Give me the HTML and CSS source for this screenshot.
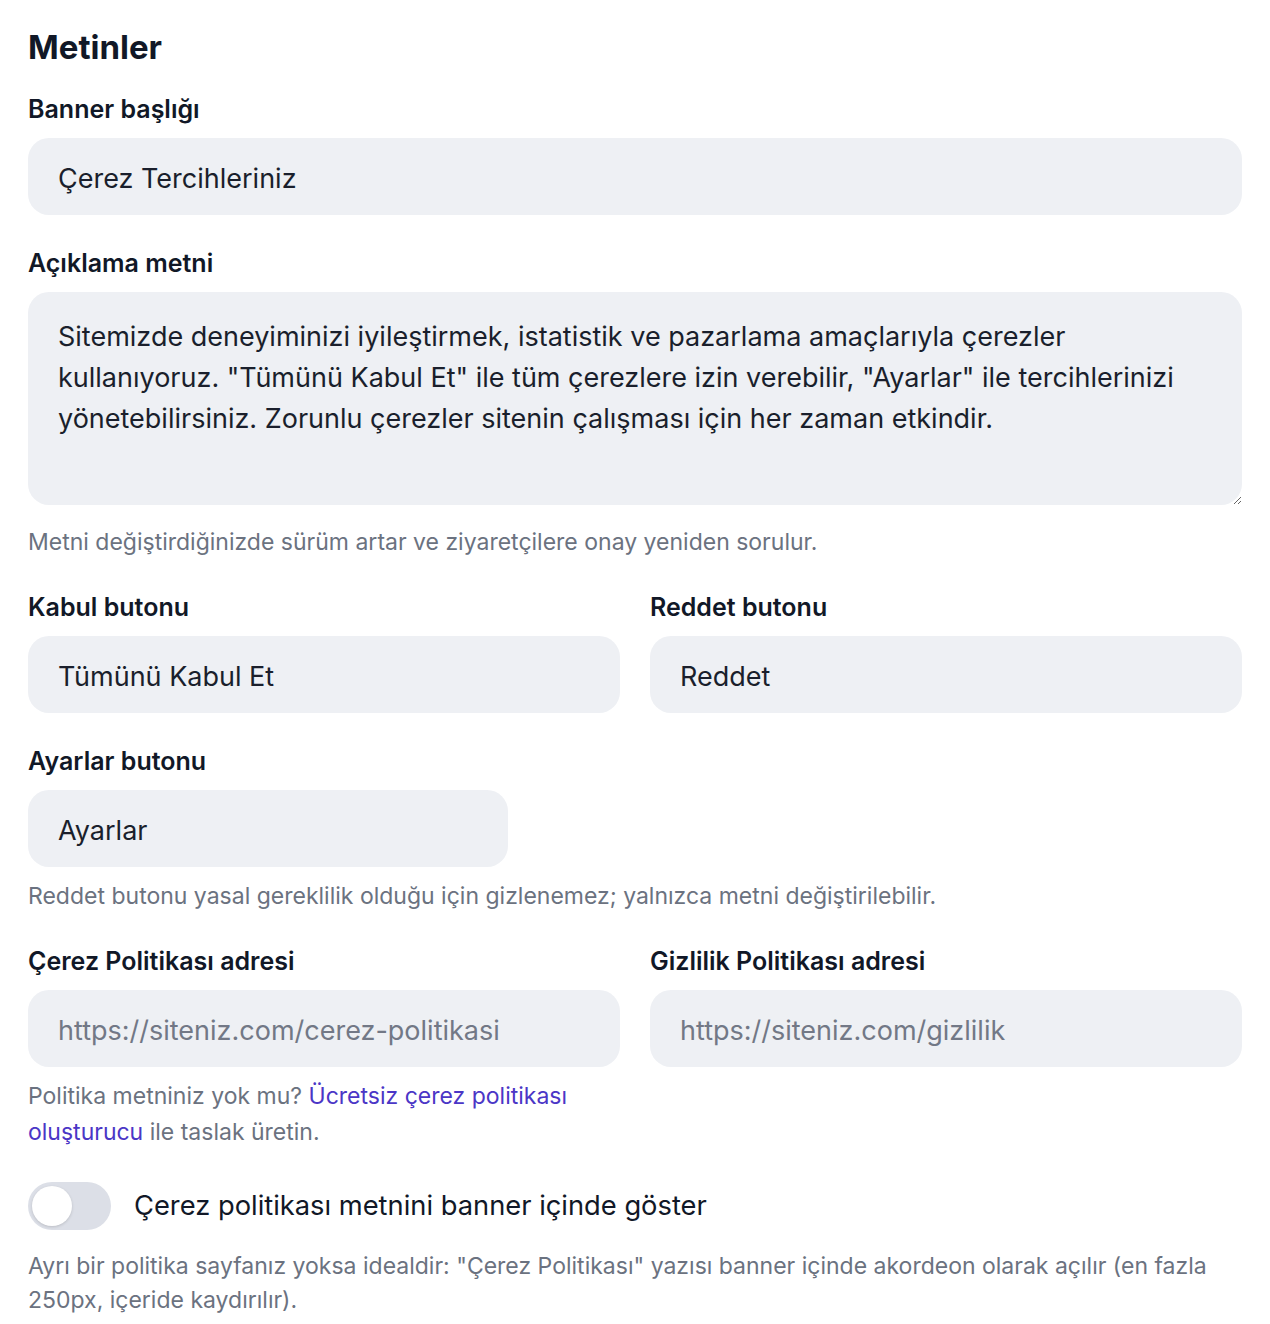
FILE: index.html
```html
<!DOCTYPE html>
<html lang="tr">
<head>
<meta charset="utf-8">
<title>Metinler</title>
<link rel="stylesheet" href="styles.css">
</head>
<body>
<main class="page">
  <h2 class="title">Metinler</h2>

  <div class="block field">
    <label class="label" for="t1">Banner başlığı</label>
    <input class="input" id="t1" type="text" value="Çerez Tercihleriniz">
  </div>

  <div class="block field">
    <label class="label" for="t2">Açıklama metni</label>
    <textarea class="input textarea" id="t2">Sitemizde deneyiminizi iyileştirmek, istatistik ve pazarlama amaçlarıyla çerezler kullanıyoruz. "Tümünü Kabul Et" ile tüm çerezlere izin verebilir, "Ayarlar" ile tercihlerinizi yönetebilirsiniz. Zorunlu çerezler sitenin çalışması için her zaman etkindir.</textarea>
    <p class="help help-ta">Metni değiştirdiğinizde sürüm artar ve ziyaretçilere onay yeniden sorulur.</p>
  </div>

  <div class="block grid">
    <div class="field">
      <label class="label" for="t3">Kabul butonu</label>
      <input class="input" id="t3" type="text" value="Tümünü Kabul Et">
    </div>
    <div class="field">
      <label class="label" for="t4">Reddet butonu</label>
      <input class="input" id="t4" type="text" value="Reddet">
    </div>
  </div>

  <div class="block field">
    <label class="label" for="t5">Ayarlar butonu</label>
    <input class="input input-narrow" id="t5" type="text" value="Ayarlar">
    <p class="help">Reddet butonu yasal gereklilik olduğu için gizlenemez; yalnızca metni değiştirilebilir.</p>
  </div>

  <div class="block grid">
    <div class="field">
      <label class="label" for="t6">Çerez Politikası adresi</label>
      <input class="input" id="t6" type="text" placeholder="https://siteniz.com/cerez-politikasi">
      <p class="help help-tall">Politika metniniz yok mu? <a class="link" href="#">Ücretsiz çerez politikası oluşturucu</a> ile taslak üretin.</p>
    </div>
    <div class="field">
      <label class="label" for="t7">Gizlilik Politikası adresi</label>
      <input class="input" id="t7" type="text" placeholder="https://siteniz.com/gizlilik">
    </div>
  </div>

  <div class="block toggle-row">
    <span class="toggle"><span class="knob"></span></span>
    <span class="toggle-label">Çerez politikası metnini banner içinde göster</span>
  </div>
  <p class="help help-last">Ayrı bir politika sayfanız yoksa idealdir: "Çerez Politikası" yazısı banner içinde akordeon olarak açılır (en fazla 250px, içeride kaydırılır).</p>
</main>
</body>
</html>
```

FILE: styles.css
```css
* { box-sizing: border-box; }

html, body {
  margin: 0;
  padding: 0;
  background: #ffffff;
}

body {
  font-family: Inter, "Noto Sans", "Liberation Sans", sans-serif;
  color: #111827;
}

.page {
  padding: 29px 28px 0 28px;
  display: flex;
  flex-direction: column;
}

.title {
  margin: 0 0 -4px 0;
  font-size: 33px;
  line-height: 36px;
  font-weight: 700;
  color: #111827;
}

.block { margin-top: 33px; }

.field {
  display: flex;
  flex-direction: column;
  min-width: 0;
}

.grid {
  display: grid;
  grid-template-columns: 1fr 1fr;
  column-gap: 30px;
  align-items: start;
}

.label {
  display: block;
  font-size: 25px;
  line-height: 30px;
  font-weight: 600;
  color: #111827;
  margin-bottom: 14px;
}

.input {
  display: block;
  width: 100%;
  height: 77px;
  padding: 4px 30px 0 30px;
  border: none;
  outline: none;
  border-radius: 21px;
  background: #eef0f4;
  font-family: Inter, "Noto Sans", "Liberation Sans", sans-serif;
  font-size: 27px;
  color: #1a1f2c;
}

.input::placeholder { color: #727886; }

.input-narrow { width: 480px; }

.textarea {
  height: 213px;
  padding: 24px 30px 20px 30px;
  font-size: 27px;
  line-height: 41px;
  resize: vertical;
}

.help {
  margin: 12px 0 0 0;
  font-size: 23px;
  line-height: 34px;
  color: #6b7280;
}

.help-ta { margin-top: 20px; }

.help-tall { line-height: 36px; margin-top: 11px; }

.link {
  color: #4b36c6;
  text-decoration: none;
}

.toggle-row {
  display: flex;
  align-items: center;
  gap: 23px;
  margin-top: 32px;
}

.toggle {
  position: relative;
  width: 83px;
  height: 48px;
  border-radius: 24px;
  background: #dcdfe7;
  flex: none;
}

.knob {
  position: absolute;
  left: 4px;
  top: 4px;
  width: 40px;
  height: 40px;
  border-radius: 50%;
  background: #ffffff;
  box-shadow: 0 1px 3px rgba(0, 0, 0, 0.15);
}

.toggle-label {
  font-size: 27.3px;
  line-height: 34px;
  color: #111827;
}

.help-last { margin-top: 19px; }
```
